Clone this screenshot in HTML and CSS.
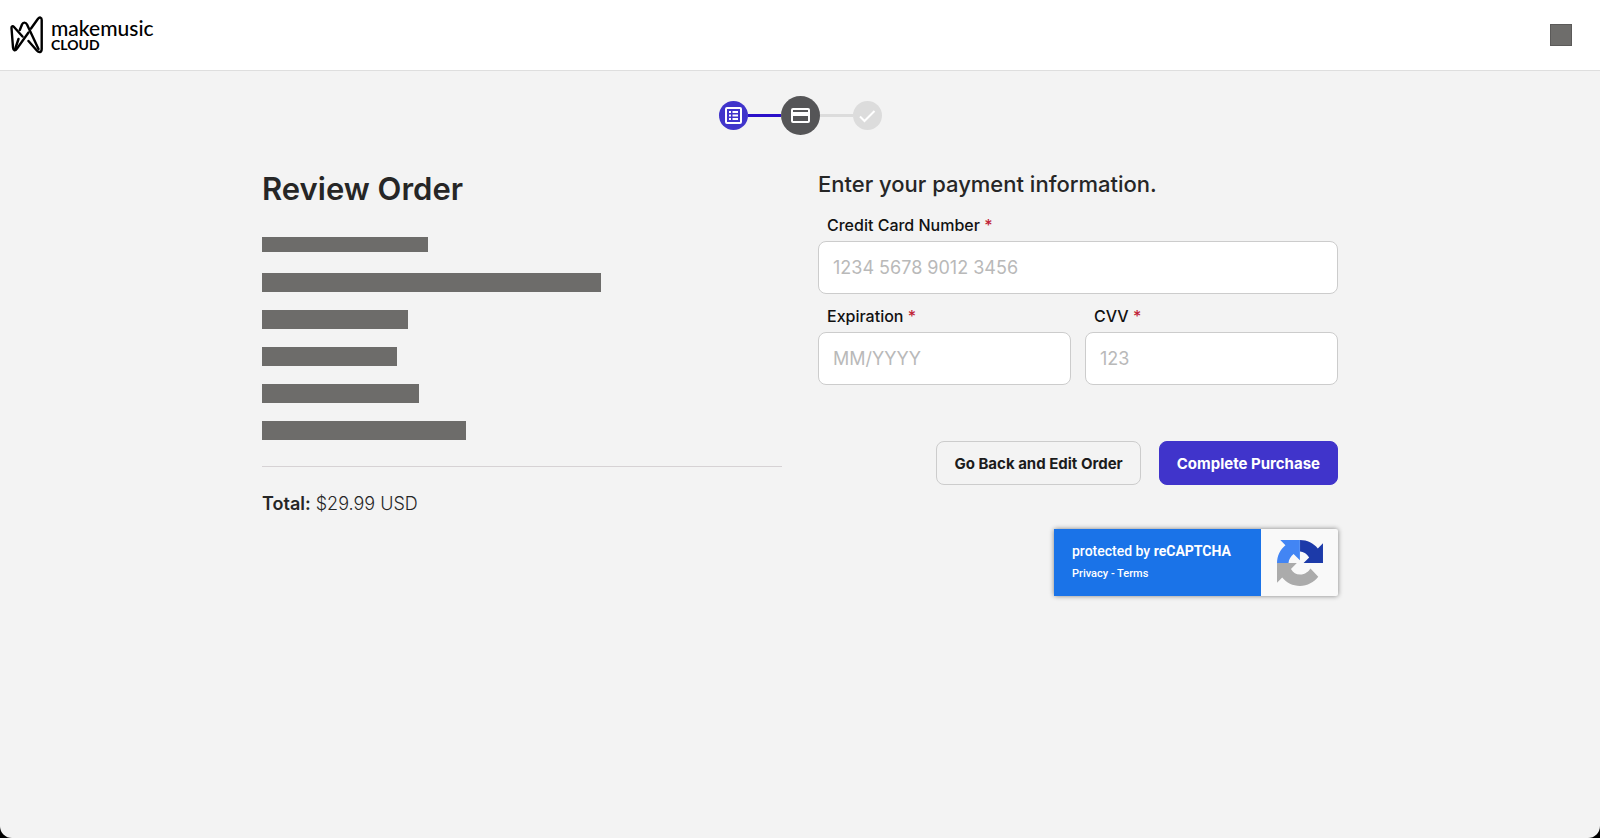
FILE: index.html
```html
<!DOCTYPE html>
<html lang="en">
<head>
    <meta charset="UTF-8">
    <meta name="viewport" content="width=device-width, initial-scale=1.0">
    <title>Review Order</title>
    <link rel="stylesheet" href="styles.css">
</head>
<body>
    <header class="site-header">
        <a class="logo" href="#">
            <svg class="logo-mark" viewBox="0 0 34 38" fill="none" stroke="#000" stroke-width="2.4" stroke-linecap="round" stroke-linejoin="round">
                <path d="M12.500 20.500 4 11C2.700 9.500 1.400 10.200 1.500 12L3 31.500C3.200 34.800 5.200 35.200 7 32.600L18.500 16.500"/>
                <path d="M5 33.500 8.500 23"/>
                <path d="M9.800 14 12 8.500C13 6 15.800 6 17 8.500L28.500 33"/>
                <path d="M21 12.500 28 2.800C29.600.8 31.700 1.300 31.700 4V33C31.700 36.500 29 37 26.800 34.500L18.500 25"/>
            </svg>
            <span class="logo-text">
                <span class="logo-name">makemusic</span>
                <span class="logo-product">CLOUD</span>
            </span>
        </a>
        <button class="account" type="button" aria-label="Account"></button>
    </header>

    <main>
        <div class="stepper">
            <span class="step done">
                <svg width="17" height="17" viewBox="0 0 17 17" fill="none" stroke="#fff" stroke-width="2">
                    <rect x="1" y="1" width="15" height="15" rx="1"/>
                    <path d="M4 5h2M4 8.500h2M4 12h2M7.500 5H13M7.500 8.500H13M7.500 12H13"/>
                </svg>
            </span>
            <span class="step-line done"></span>
            <span class="step current">
                <svg width="19" height="15" viewBox="0 0 19 15">
                    <rect x="1" y="1" width="17" height="13" rx="1" fill="none" stroke="#fff" stroke-width="2"/>
                    <path d="M1 4h17v4H1z" fill="#fff"/>
                </svg>
            </span>
            <span class="step-line"></span>
            <span class="step">
                <svg width="18" height="14" viewBox="0 0 18 14" fill="none" stroke="#fff" stroke-width="2">
                    <path d="M2 7.500 6.500 12 16.500 2"/>
                </svg>
            </span>
        </div>

        <div class="checkout">
            <section class="order">
                <h1>Review Order</h1>
                <div class="bar bar-account"></div>
                <ul class="order-lines">
                    <li><span class="bar bar-plan"></span></li>
                    <li><span class="bar bar-term"></span></li>
                    <li><span class="bar bar-seats"></span></li>
                    <li><span class="bar bar-price"></span></li>
                    <li><span class="bar bar-renewal"></span></li>
                </ul>
                <p class="total"><strong>Total:</strong> $29.99 USD</p>
            </section>

            <form class="payment">
                <h2>Enter your payment information.</h2>
                <div class="fields">
                    <div class="field wide">
                        <label for="card">Credit Card Number <span class="required">*</span></label>
                        <input id="card" type="text" placeholder="1234 5678 9012 3456">
                    </div>
                    <div class="field">
                        <label for="expiration">Expiration <span class="required">*</span></label>
                        <input id="expiration" type="text" placeholder="MM/YYYY">
                    </div>
                    <div class="field">
                        <label for="cvv">CVV <span class="required">*</span></label>
                        <input id="cvv" type="text" placeholder="123">
                    </div>
                </div>
                <div class="actions">
                    <button class="btn" type="button">Go Back and Edit Order</button>
                    <button class="btn primary" type="submit">Complete Purchase</button>
                </div>
                <div class="captcha">
                    <div class="captcha-text">
                        <div class="captcha-title">protected by <strong>reCAPTCHA</strong></div>
                        <div class="captcha-links"><a href="#">Privacy</a> - <a href="#">Terms</a></div>
                    </div>
                    <div class="captcha-logo">
                        <svg width="46" height="46" viewBox="0 0 64 64">
                            <path fill="#1c3aa9" d="M64 31.955l-.033-1.370V4.687l-7.160 7.160C50.948 4.674 42.033.093 32.050.093v15.900c4.800.400 8.600 2.400 12.700 8.200l-7.752 7.751z"/>
                            <path fill="#4285f4" d="M31.862.094l-1.370.033H4.594l7.160 7.160C4.581 13.147 0 22.061 0 32.045h16c.4-5 3.400-9.600 7.111-12.500l8.751 8.752z"/>
                            <path fill="#ababab" d="M.001 32.045l.033 1.370v25.898l7.160-7.160c5.860 7.173 14.774 11.754 24.758 11.754 10.390 0 19.622-4.962 25.452-12.650L46.550 39.500c-2.440 4-7.700 8.600-14.500 8.500-5.500 0-9.500-2.800-12.600-7.800l8.155-8.155z"/>
                        </svg>
                    </div>
                </div>
            </form>
        </div>
    </main>
</body>
</html>
```

FILE: styles.css
```css
* {
    box-sizing: border-box;
}

html {
    background: #000;
}

body {
    margin: 0;
    min-height: 100vh;
    background: #f3f3f3;
    border-radius: 0 0 12px 12px;
    font-family: Inter, 'Liberation Sans', sans-serif;
    font-size: 16px;
    color: #262626;
}

h1, h2, p, ul {
    margin: 0;
    padding: 0;
}

.site-header {
    display: flex;
    justify-content: space-between;
    align-items: center;
    height: 71px;
    padding: 0 28px 0 10px;
    background: #fff;
    border-bottom: 1px solid #dedede;
}

.logo {
    display: flex;
    align-items: center;
    gap: 7px;
    color: #000;
    text-decoration: none;
}

.logo-mark {
    width: 34px;
    height: 38px;
}

.logo-text {
    display: flex;
    flex-direction: column;
    padding-top: 2px;
    font-family: Lato, sans-serif;
}

.logo-name {
    font-size: 21px;
    font-weight: 500;
    line-height: 18px;
}

.logo-product {
    font-size: 14px;
    font-weight: bold;
    line-height: 16px;
}

.account {
    width: 22px;
    height: 22px;
    padding: 0;
    background: #6e6d6b;
    border: 1px solid #5b5a59;
}

.stepper {
    display: flex;
    justify-content: center;
    align-items: center;
    padding: 25px 0 34px;
}

.step {
    display: flex;
    justify-content: center;
    align-items: center;
    width: 29px;
    height: 29px;
    border-radius: 50%;
    background: #dcdcdc;
}

.step.done {
    background: #4034cb;
}

.step.current {
    width: 39px;
    height: 39px;
    background: #555557;
}

.step-line {
    width: 33px;
    height: 3px;
    background: #dcdcdc;
}

.step-line.done {
    background: #2a10c9;
}

.checkout {
    display: grid;
    grid-template-columns: 1fr 1fr;
    gap: 36px;
    max-width: 1124px;
    margin: 0 auto;
    padding: 0 24px;
}

h1 {
    font-size: 31px;
    font-weight: 600;
    line-height: 40px;
}

.bar {
    height: 19px;
    background: #6d6c6a;
}

.bar-account {
    width: 166px;
    height: 15px;
    margin: 28px 0 12px;
}

.bar-plan {
    width: 339px;
}

.bar-term {
    width: 146px;
}

.bar-seats {
    width: 135px;
}

.bar-price {
    width: 157px;
}

.bar-renewal {
    width: 204px;
}

.order-lines {
    padding-bottom: 17px;
    border-bottom: 1px solid #d6d2d4;
    list-style: none;
}

.order-lines li {
    display: flex;
    align-items: center;
    height: 37px;
}

.total {
    margin-top: 24px;
    font-size: 18px;
    font-weight: 300;
    line-height: 26px;
}

.total strong {
    font-weight: 600;
}

h2 {
    font-size: 22px;
    font-weight: 500;
    line-height: 30px;
}

.fields {
    display: grid;
    grid-template-columns: 1fr 1fr;
    gap: 12px 14px;
    margin-top: 16px;
}

.field {
    display: flex;
    flex-direction: column;
    gap: 6px;
}

.field.wide {
    grid-column: 1 / -1;
}

label {
    padding-left: 9px;
    font-weight: 500;
    line-height: 20px;
    color: #111;
}

.required {
    color: #c01f37;
}

input {
    width: 100%;
    height: 53px;
    padding: 0 14px;
    background: #fff;
    border: 1px solid #ccc;
    border-radius: 8px;
    font: inherit;
    font-size: 18px;
}

input::placeholder {
    color: #b9b9b9;
}

.actions {
    display: flex;
    justify-content: flex-end;
    gap: 18px;
    margin-top: 56px;
}

.btn {
    height: 44px;
    padding: 0 17px;
    background: transparent;
    border: 1px solid #ccc;
    border-radius: 8px;
    font: inherit;
    font-size: 15px;
    font-weight: 700;
    color: #1c1c1c;
    cursor: pointer;
}

.btn.primary {
    background: #4034cb;
    border-color: #4034cb;
    color: #fff;
}

.captcha {
    display: flex;
    width: 284px;
    height: 67px;
    margin: 44px 0 0 auto;
    background: #f9f9f9;
    border-radius: 2px;
    box-shadow: 0 0 5px #808080;
    font-family: Roboto, sans-serif;
    color: #fff;
}

.captcha-text {
    flex: 1;
    padding: 12px 18px;
    background: #1a73e8;
}

.captcha-title {
    font-size: 14px;
    font-weight: 500;
    line-height: 20px;
}

.captcha-title strong {
    font-weight: 700;
}

.captcha-links {
    margin-top: 4px;
    font-size: 11px;
    font-weight: 500;
    line-height: 18px;
}

.captcha-links a {
    color: #fff;
    text-decoration: none;
}

.captcha-logo {
    display: flex;
    justify-content: center;
    align-items: center;
    width: 77px;
}
```
